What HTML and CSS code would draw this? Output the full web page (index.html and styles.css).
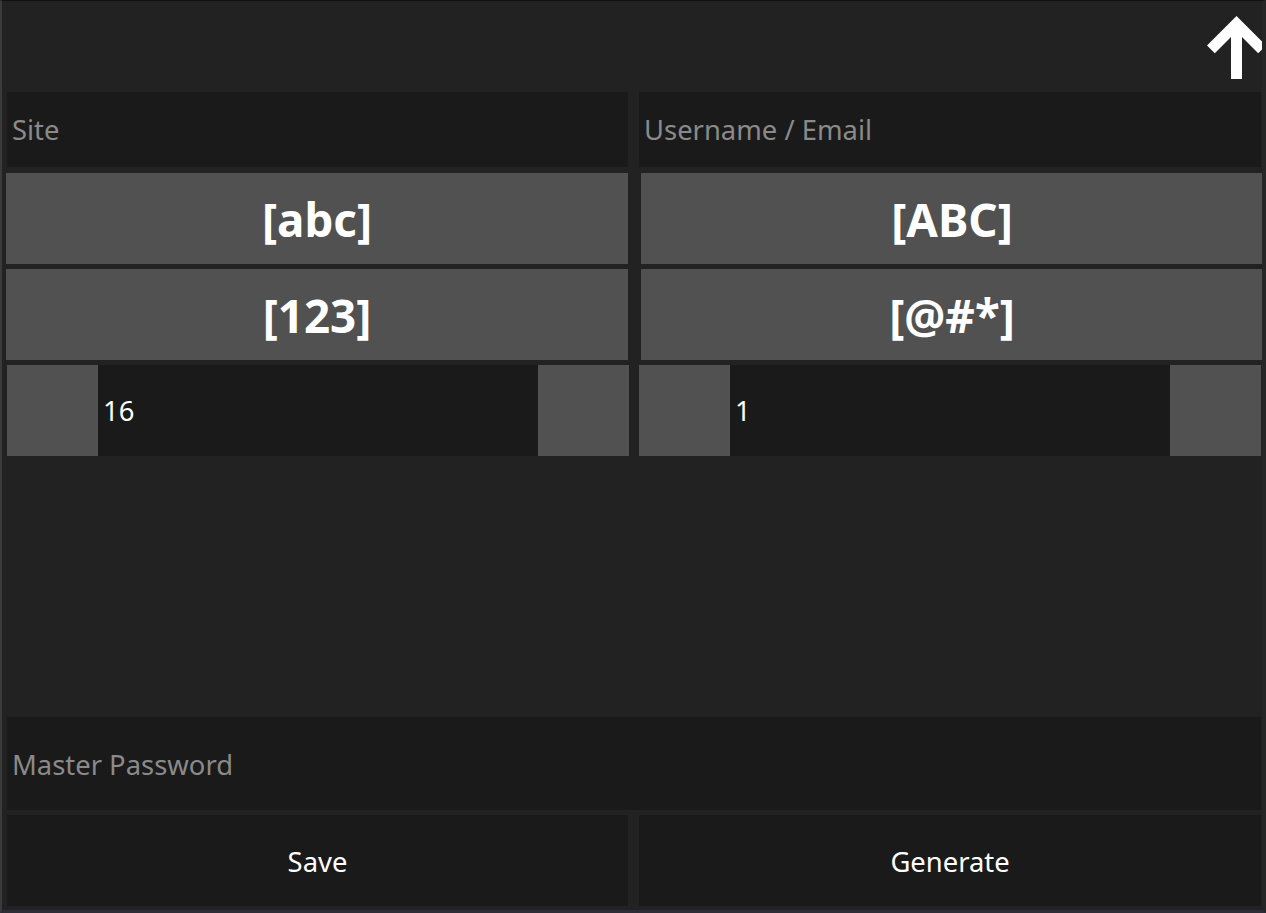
FILE: index.html
```html
<!DOCTYPE html>
<html lang="en">
<head>
<meta charset="utf-8">
<title>Password Generator</title>
<link rel="stylesheet" href="styles.css">
</head>
<body>
<div class="app">
  <header class="topbar">
    <svg class="up-icon" width="56" height="66" viewBox="0 0 56 66" aria-hidden="true">
      <polygon points="30.5,2 60,31.5 52.2,39.3 36,23.1 36,65 25,65 25,23.1 8.8,39.3 1,31.5" fill="#ffffff"/>
    </svg>
  </header>
  <main class="form">
    <div class="grid grid-fields">
      <div class="field"><span class="placeholder">Site</span></div>
      <div class="field"><span class="placeholder">Username / Email</span></div>
    </div>
    <div class="grid grid-buttons">
      <div class="toggle left">[abc]</div>
      <div class="toggle right">[ABC]</div>
      <div class="toggle left">[123]</div>
      <div class="toggle right">[@#*]</div>
      <div class="spin spin-left">
        <div class="spin-btn"></div>
        <div class="spin-value">16</div>
        <div class="spin-btn"></div>
      </div>
      <div class="spin">
        <div class="spin-btn"></div>
        <div class="spin-value">1</div>
        <div class="spin-btn"></div>
      </div>
    </div>
    <div class="spacer"></div>
    <div class="field master"><span class="placeholder">Master Password</span></div>
    <div class="grid grid-actions">
      <div class="action">Save</div>
      <div class="action">Generate</div>
    </div>
  </main>
</div>
</body>
</html>
```

FILE: styles.css
```css
* { box-sizing: border-box; }
html, body {
  margin: 0;
  padding: 0;
  background: #222222;
  font-family: "Noto Sans", "Open Sans", sans-serif;
}
.app {
  width: 1266px;
  height: 913px;
  display: flex;
  flex-direction: column;
  background: #222222;
  border-left: 2px solid #3b3b3b;
  border-top: 1px solid #111111;
  border-bottom: 3px solid #2b2e37;
  border-right: 4px solid #262626;
  overflow: hidden;
}
.topbar {
  height: 91px;
  flex: none;
  display: flex;
  justify-content: flex-end;
  align-items: flex-start;
  padding-top: 13px;
}
.up-icon { display: block; overflow: hidden; }
.form {
  flex: 1;
  display: flex;
  flex-direction: column;
  padding: 0 1px 4px 5px;
}
.grid {
  display: grid;
  grid-template-columns: 621px 622px;
  column-gap: 11px;
}
.grid-fields { height: 75px; }
.field {
  background: #1a1a1a;
  display: flex;
  align-items: center;
  padding-left: 5px;
  font-size: 27.4px;
  height: 100%;
}
.placeholder { color: #8a8a8a; }
.grid-buttons {
  margin-top: 6px;
  grid-auto-rows: 91px;
  row-gap: 5px;
}
.toggle {
  background: #515151;
  color: #ffffff;
  font-weight: 700;
  font-size: 45.7px;
  display: flex;
  align-items: center;
  justify-content: center;
}
.toggle.left { margin-left: -1px; }
.toggle.right { margin-left: 2px; margin-right: -2px; }
.spin {
  display: grid;
  grid-template-columns: 91px 1fr 91px;
  background: #1a1a1a;
}
.spin-left { margin-right: -1px; }
.spin-btn { background: #515151; }
.spin-value {
  color: #ffffff;
  font-size: 27.4px;
  display: flex;
  align-items: center;
  padding-left: 5px;
}
.spacer { flex: 1; }
.master { height: 93px; flex: none; padding-top: 2px; }
.grid-actions {
  margin-top: 5px;
  height: 91px;
}
.action {
  background: #1a1a1a;
  color: #ffffff;
  font-size: 27.4px;
  display: flex;
  align-items: center;
  justify-content: center;
  padding-top: 2px;
}
```
